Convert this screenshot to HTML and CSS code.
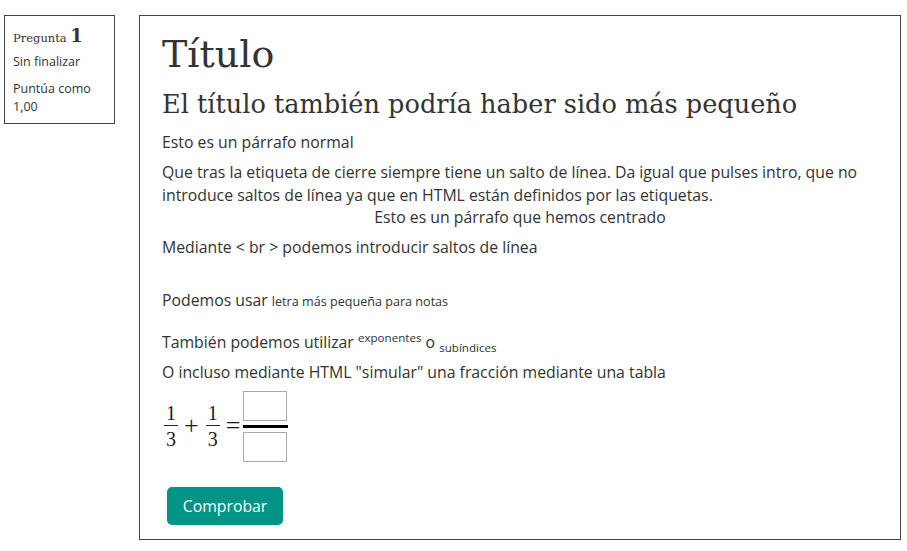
FILE: index.html
```html
<!DOCTYPE html>
<html lang="es">
<head>
<meta charset="utf-8">
<title>Pregunta</title>
<link rel="stylesheet" href="styles.css">
</head>
<body>
<div class="page">
  <aside class="info">
    <h3 class="qno"><span class="qlabel">Pregunta</span> <span class="num">1</span></h3>
    <div class="state">Sin finalizar</div>
    <div class="grade">Puntúa como 1,00</div>
  </aside>
  <main class="content">
    <h1 class="title">Título</h1>
    <h2 class="subtitle">El título también podría haber sido más pequeño</h2>
    <p class="para">Esto es un párrafo normal</p>
    <p class="para flush">Que tras la etiqueta de cierre siempre tiene un salto de línea. Da igual que pulses intro, que no introduce saltos de línea ya que en HTML están definidos por las etiquetas.</p>
    <p class="para center">Esto es un párrafo que hemos centrado</p>
    <p class="para">Mediante &lt; br &gt; podemos introducir saltos de línea<br><br></p>
    <p class="para">Podemos usar <small class="note">letra más pequeña para notas</small></p>
    <p class="para sup-line">También podemos utilizar <sup class="sup">exponentes</sup> o <sub class="sub">subíndices</sub></p>
    <p class="para">O incluso mediante HTML "simular" una fracción mediante una tabla</p>
    <div class="math">
      <span class="frac"><span class="fn">1</span><span class="fd">3</span></span>
      <span class="op plus">+</span>
      <span class="frac"><span class="fn">1</span><span class="fd">3</span></span>
      <span class="op eq">=</span>
      <span class="answer">
        <span class="box"></span>
        <span class="bar"></span>
        <span class="box"></span>
      </span>
    </div>
    <button class="check" type="button">Comprobar</button>
  </main>
</div>
</body>
</html>
```
FILE: styles.css
```css
html, body {
  margin: 0;
  padding: 0;
  background: #fff;
}
body {
  font-family: "Open Sans", "Liberation Sans", sans-serif;
  color: #333;
}
.page {
  display: flex;
  align-items: flex-start;
  gap: 24px;
  padding: 15px 0 0 4px;
}
.info {
  box-sizing: border-box;
  width: 111px;
  height: 109px;
  border: 1px solid #3f474b;
  padding: 9px 8px 0 8px;
  font-size: 12.5px;
  line-height: 18px;
}
.qno {
  margin: 0 0 4px 0;
  font-family: "DejaVu Serif", serif;
  font-weight: normal;
  font-size: 11.5px;
  line-height: 22px;
}
.num {
  font-weight: bold;
  font-size: 18px;
}
.state {
  margin-bottom: 9px;
}
.grade {
  font-size: 12.5px;
}
.content {
  box-sizing: border-box;
  width: 762px;
  height: 525px;
  border: 1px solid #3f474b;
  padding: 14px 22px 0 22px;
}
.title {
  margin: 0;
  font-family: "DejaVu Serif", serif;
  font-weight: normal;
  font-size: 38px;
  line-height: 48px;
  color: #333;
}
.subtitle {
  margin: 10px 0 11px 0;
  font-family: "DejaVu Serif", serif;
  font-weight: normal;
  font-size: 25.6px;
  line-height: 32px;
  color: #333;
}
.para {
  margin: 0 0 7.5px 0;
  font-size: 15.8px;
  line-height: 22.5px;
}
.flush {
  margin-bottom: 0;
}
.center {
  text-align: center;
}
.note {
  font-size: 12.6px;
}
.sup-line {
  padding-top: 10px;
}
.sup, .sub {
  font-size: 11.6px;
  line-height: 0;
}
.math {
  display: flex;
  align-items: center;
  margin: 7px 0 0 1px;
  font-family: "Liberation Serif", "DejaVu Serif", serif;
  font-size: 20px;
  color: #1a1a1a;
}
.frac {
  display: inline-flex;
  flex-direction: column;
  align-items: center;
  padding: 0 1px;
}
.fn {
  line-height: 18px;
  padding: 0 2px 3px;
  border-bottom: 1px solid #222;
}
.fd {
  line-height: 18px;
  padding-top: 4px;
}
.op {
  font-size: 26px;
  line-height: 24px;
  margin: 0 6px 0 5px;
}
.eq {
  margin: 0 3px 0 5px;
}
.answer {
  display: inline-flex;
  flex-direction: column;
  align-items: flex-start;
  width: 45px;
}
.box {
  box-sizing: border-box;
  width: 44px;
  height: 30px;
  border: 1px solid #aaa;
  background: #fff;
}
.bar {
  width: 45px;
  height: 3px;
  background: #000;
  margin: 4px 0;
}
.check {
  margin: 25px 0 0 5px;
  width: 116px;
  height: 38px;
  border: 0;
  border-radius: 5px;
  background: #009486;
  color: #fff;
  font-family: "Open Sans", "Liberation Sans", sans-serif;
  font-size: 15.8px;
  cursor: pointer;
}
```
